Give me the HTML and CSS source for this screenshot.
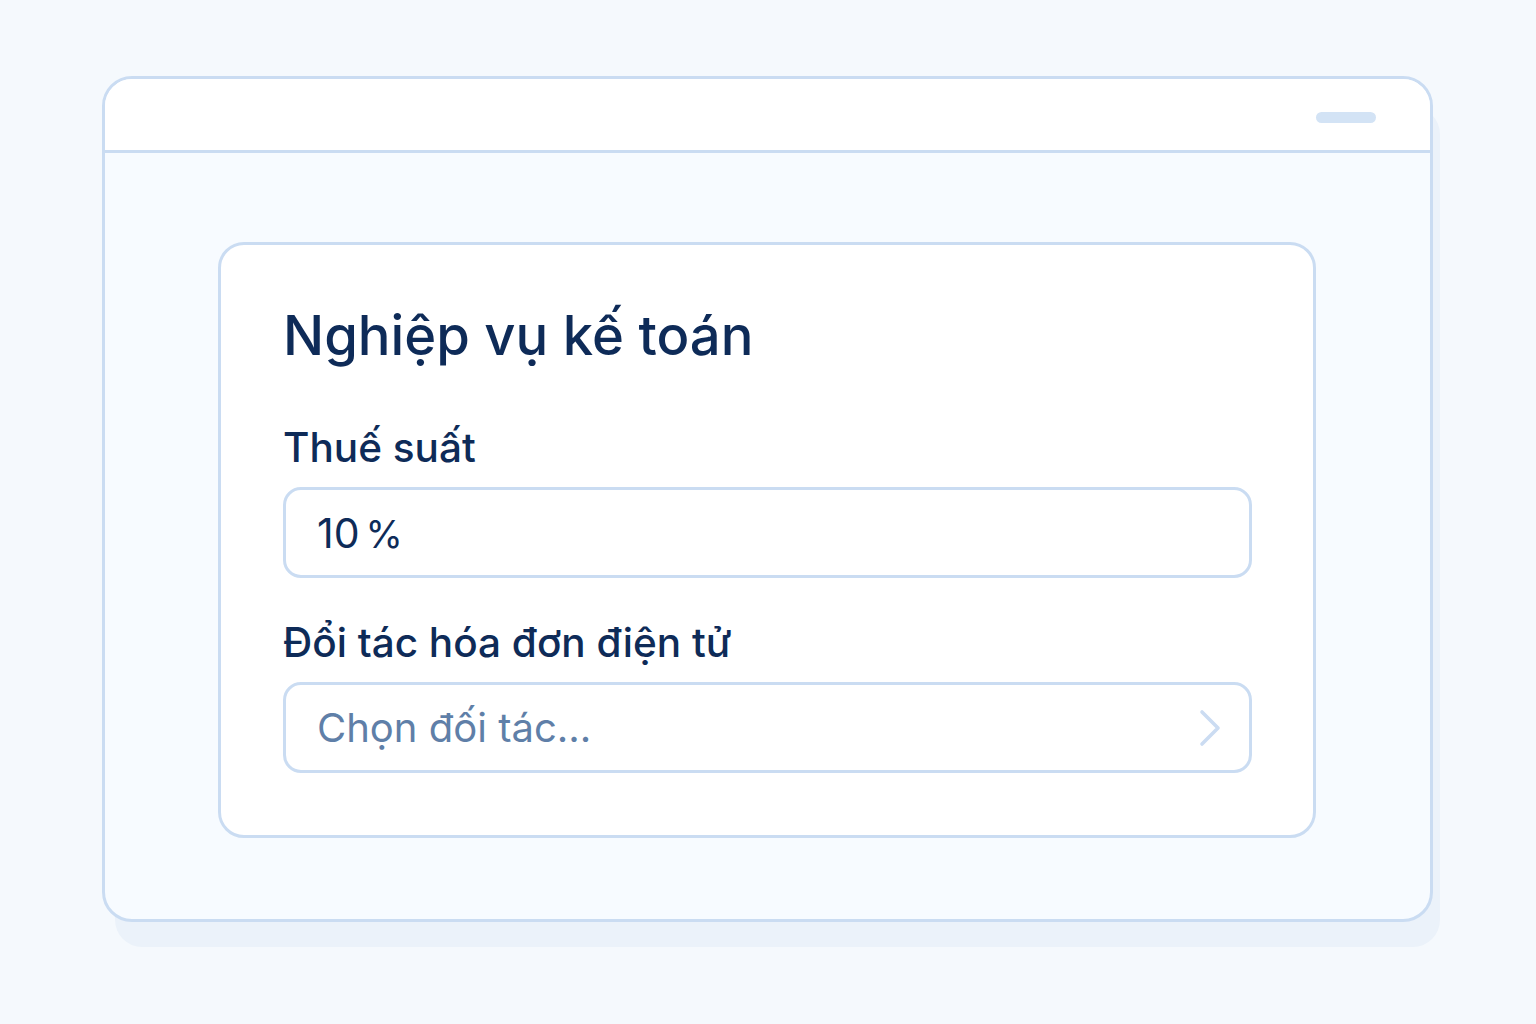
FILE: index.html
```html
<!DOCTYPE html>
<html lang="vi">
<head>
<meta charset="utf-8">
<title>Nghiệp vụ kế toán</title>
<link rel="stylesheet" href="styles.css">
</head>
<body>
<div class="window">
  <div class="titlebar"><span class="pill"></span></div>
  <div class="content">
    <section class="card">
      <h1 class="title">Nghiệp vụ kế toán</h1>
      <label class="label">Thuế suất</label>
      <div class="field"><span class="value">10<span class="pct">%</span></span></div>
      <label class="label label-2">Đổi tác hóa đơn điện tử</label>
      <div class="field select">
        <span class="placeholder">Chọn đối tác...</span>
        <svg class="chevron" width="24" height="38" viewBox="0 0 24 38"><path d="M3 3 L19 19 L3 35" fill="none" stroke="#cbdcf2" stroke-width="3.6" stroke-linecap="round" stroke-linejoin="round"/></svg>
      </div>
    </section>
  </div>
</div>
</body>
</html>
```
FILE: styles.css
```css
html, body {
  margin: 0;
  padding: 0;
}
body {
  background: #f5f9fd;
  width: 1536px;
  height: 1024px;
  overflow: hidden;
  font-family: Inter, "Noto Sans", sans-serif;
  color: #0f2c59;
}
.window {
  margin: 76px 0 0 102px;
  width: 1331px;
  height: 846px;
  box-sizing: border-box;
  border: 3px solid #cadcf2;
  border-radius: 30px;
  background: #f7fbff;
  box-shadow: 10px 28px 0 -3px #ebf2fa;
  display: flex;
  flex-direction: column;
  overflow: hidden;
}
.titlebar {
  height: 74px;
  box-sizing: border-box;
  border-bottom: 3px solid #cadcf2;
  background: #ffffff;
  display: flex;
  justify-content: flex-end;
  align-items: center;
  padding-right: 54px;
  padding-top: 6px;
}
.pill {
  width: 60px;
  height: 11px;
  border-radius: 6px;
  background: #d3e3f5;
}
.content {
  flex: 1;
  padding: 89px 0 0 113px;
}
.card {
  width: 1098px;
  height: 596px;
  box-sizing: border-box;
  border: 3px solid #cadcf2;
  border-radius: 26px;
  background: #ffffff;
  padding: 63px 61px 0 62px;
  display: flex;
  flex-direction: column;
}
.title {
  margin: 0;
  font-size: 54.4px;
  line-height: 54px;
  font-weight: 500;
  color: #0e2b58;
}
.label {
  display: block;
  margin-top: 66px;
  font-size: 40.5px;
  line-height: 40px;
  font-weight: 500;
  color: #0e2b58;
}
.label-2 {
  margin-top: 45px;
}
.field {
  margin-top: 19px;
  height: 91px;
  flex: none;
  box-sizing: border-box;
  border: 3px solid #cadcf2;
  border-radius: 18px;
  display: flex;
  align-items: center;
  padding: 0 26px 0 31px;
}
.value {
  font-size: 41px;
  font-weight: 400;
  color: #0e2b58;
}
.pct {
  margin-left: 6px;
  font-size: 38px;
}
.select {
  justify-content: space-between;
}
.placeholder {
  font-size: 40px;
  font-weight: 400;
  color: #5f7fa8;
}
.chevron {
  display: block;
}
```
